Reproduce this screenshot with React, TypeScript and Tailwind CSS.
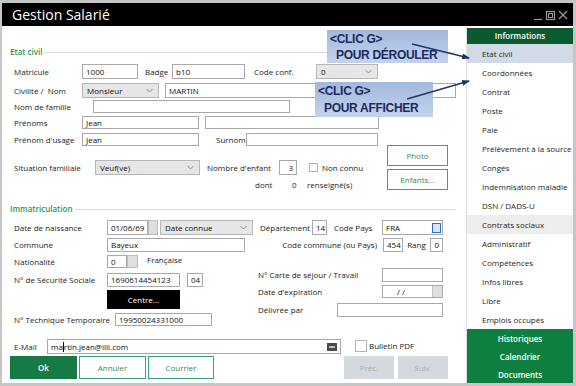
import React from 'react';

function Field({ className = '', children }: { className?: string; children?: React.ReactNode }) {
  return (
    <div className={`h-full shrink-0 border border-[#a9a9a9] bg-white px-[3px] flex items-center leading-none text-[#111] ${className}`}>
      {children}
    </div>
  );
}

function Chevron() {
  return (
    <svg width="7" height="5" viewBox="0 0 7 5" className="shrink-0">
      <path d="M0.5 1 L3.5 4 L6.5 1" fill="none" stroke="#8a8a8a" strokeWidth="1" />
    </svg>
  );
}

function Combo({ className = '', value }: { className?: string; value: string }) {
  return (
    <div className={`h-full shrink-0 border border-[#b7b7b7] bg-[#e6e6e6] pl-[4px] pr-[5px] flex items-center justify-between leading-none text-[#111] ${className}`}>
      <span>{value}</span>
      <Chevron />
    </div>
  );
}

function MiniBtn({ className = '' }: { className?: string }) {
  return <div className={`h-full shrink-0 bg-[#dedede] border border-[#bdbdbd] ${className}`} />;
}

function Section({ title }: { title: string }) {
  return (
    <div className="flex items-center h-[12px] pl-[8px] pr-[11px]">
      <span className="text-[#1f9a57] font-semibold">{title}</span>
      <div className="flex-1 h-px bg-[#dadada] ml-[3px]" />
    </div>
  );
}

function GreenOutline({ className = '', children }: { className?: string; children: React.ReactNode }) {
  return (
    <div className={`shrink-0 border border-[#3ba279] bg-white text-[#2c8c5c] flex items-center justify-center ${className}`}>
      {children}
    </div>
  );
}

const menu = [
  'Etat civil',
  'Coordonnées',
  'Contrat',
  'Poste',
  'Paie',
  'Prélèvement à la source',
  'Congés',
  'Indemnisation maladie',
  'DSN / DADS-U',
  'Contrats sociaux',
  'Administratif',
  'Compétences',
  'Infos libres',
  'Libre',
  'Emplois occupés',
];

function Sidebar() {
  return (
    <div className="w-[107px] shrink-0 flex flex-col pt-[2px] border-l border-[#e0e0e0]">
      <div className="h-[16px] bg-[#0b5a2f] text-white font-semibold flex items-center justify-center">
        Informations
      </div>
      {menu.map((m) => (
        <div
          key={m}
          className={`h-[19px] flex items-center pl-[15px] text-[#1e1e1e] whitespace-nowrap ${
            m === 'Etat civil' ? 'bg-[#d2dbe5]' : m === 'Contrats sociaux' ? 'bg-[#ededed]' : ''
          }`}
        >
          {m}
        </div>
      ))}
      <div className="flex-1 bg-[#0f7f3f] flex flex-col pt-[1px] text-white font-semibold">
        <div className="h-[18px] flex items-center justify-center">Historiques</div>
        <div className="h-[18px] flex items-center justify-center">Calendrier</div>
        <div className="h-[18px] flex items-center justify-center">Documents</div>
      </div>
    </div>
  );
}

function Form() {
  return (
    <div className="flex-1 flex flex-col">
      <div className="mt-[20px]">
        <Section title="Etat civil" />
      </div>

      <div className="pl-[12px] flex flex-col">
        {/* Matricule */}
        <div className="flex items-center h-[15px] mt-[6px]">
          <span className="w-[68px] shrink-0">Matricule</span>
          <Field className="w-[56px]">1000</Field>
          <span className="ml-[6px] w-[28px] shrink-0 pl-[1px]">Badge</span>
          <Field className="w-[73px]">b10</Field>
          <span className="w-[71px] shrink-0 pl-[9px]">Code conf.</span>
          <Combo className="w-[62px]" value="0" />
        </div>

        {/* Civilité */}
        <div className="flex items-center h-[15px] mt-[4px]">
          <span className="w-[68px] shrink-0 whitespace-pre">Civilité /  Nom</span>
          <Combo className="w-[77px]" value="Monsieur" />
          <Field className="ml-[6px] w-[291px]">MARTIN</Field>
        </div>

        {/* Nom de famille */}
        <div className="flex items-center h-[13px] mt-[2px]">
          <span className="w-[79px] shrink-0">Nom de famille</span>
          <Field className="w-[197px]" />
        </div>

        {/* Prénoms */}
        <div className="flex items-center h-[13px] mt-[3px]">
          <span className="w-[68px] shrink-0">Prénoms</span>
          <Field className="w-[117px]">Jean</Field>
          <Field className="ml-[6px] w-[174px]" />
        </div>

        {/* Prénom d'usage */}
        <div className="flex items-center h-[13px] mt-[4px]">
          <span className="w-[68px] shrink-0">Prénom d'usage</span>
          <Field className="w-[117px]">Jean</Field>
          <span className="ml-[17px] w-[30px] shrink-0">Surnom</span>
          <Field className="w-[132px]" />
        </div>

        {/* Situation familiale */}
        <div className="flex h-[46px] mt-[-1px]">
          <div className="w-[373px] shrink-0 flex flex-col">
            <div className="flex items-center h-[15px] mt-[15px]">
              <span className="w-[81px] shrink-0">Situation familiale</span>
              <Combo className="w-[105px]" value="Veuf(ve)" />
              <span className="ml-[7px] w-[72px] shrink-0">Nombre d'enfant</span>
              <Field className="w-[18px] justify-end">3</Field>
              <div className="ml-[12px] w-[9px] h-[9px] border border-[#b3b3b3] bg-white shrink-0" />
              <span className="ml-[4px]">Non connu</span>
            </div>
            <div className="flex items-center h-[12px] mt-[4px]">
              <span className="ml-[241px] w-[37px] shrink-0">dont</span>
              <span className="w-[15px] shrink-0">0</span>
              <span>renseigné(s)</span>
            </div>
          </div>
          <div className="flex flex-col gap-[3px]">
            <GreenOutline className="w-[61px] h-[21px]">Photo</GreenOutline>
            <GreenOutline className="w-[61px] h-[21px]">Enfants...</GreenOutline>
          </div>
        </div>
      </div>

      <div className="mt-[12px] -ml-[0px]">
        <Section title="Immatriculation" />
      </div>

      <div className="pl-[12px] flex flex-col">
        {/* Date de naissance */}
        <div className="flex items-center h-[15px] mt-[5px]">
          <span className="w-[93px] shrink-0">Date de naissance</span>
          <Field className="w-[41px]">01/06/69</Field>
          <MiniBtn className="w-[10px]" />
          <Combo className="ml-[2px] w-[93px]" value="Date connue" />
          <span className="ml-[7px] w-[52px] shrink-0">Département</span>
          <Field className="w-[15px]">14</Field>
          <span className="ml-[7px] w-[48px] shrink-0">Code Pays</span>
          <Field className="w-[61px] justify-between pr-[1px]">
            <span>FRA</span>
            <div className="w-[9px] h-[10px] border-[1.5px] border-[#2a6bc6] bg-[#e4e4e4]" />
          </Field>
        </div>

        {/* Commune */}
        <div className="flex items-center h-[14px] mt-[3px]">
          <span className="w-[93px] shrink-0">Commune</span>
          <Field className="w-[138px]">Bayeux</Field>
          <span className="w-[138px] shrink-0 text-right pr-[6px]">Code commune (ou Pays)</span>
          <Field className="w-[20px]">454</Field>
          <span className="w-[27px] shrink-0 text-center">Rang</span>
          <Field className="w-[13px] justify-end">0</Field>
        </div>

        <div className="flex">
          <div className="w-[244px] shrink-0 flex flex-col">
            <div className="flex items-center h-[13px] mt-[3px]">
              <span className="w-[93px] shrink-0">Nationalité</span>
              <Field className="w-[20px]">0</Field>
              <MiniBtn className="w-[11px]" />
              <span className="ml-[9px] -mt-[3px]">Française</span>
            </div>
            <div className="flex items-center h-[14px] mt-[5px]">
              <span className="w-[93px] shrink-0">N° de Sécurité Sociale</span>
              <Field className="w-[73px]">1690614454123</Field>
              <Field className="ml-[7px] w-[16px]">04</Field>
            </div>
            <div className="flex h-[19px] mt-[3px]">
              <div className="ml-[93px] w-[73px] bg-black text-white flex items-center justify-center">Centre...</div>
            </div>
            <div className="flex items-center h-[13px] mt-[4px]">
              <span className="w-[101px] shrink-0">N° Technique Temporaire</span>
              <Field className="w-[97px]">19950024331000</Field>
            </div>
          </div>
          <div className="w-[185px] shrink-0 flex flex-col">
            <div className="flex items-center h-[14px] mt-[16px]">
              <span className="flex-1">N° Carte de séjour / Travail</span>
              <Field className="w-[61px]" />
            </div>
            <div className="flex items-center h-[13px] mt-[3px]">
              <span className="flex-1">Date d'expiration</span>
              <Field className="w-[61px] justify-between pr-0 pl-[14px]">
                <span>/ /</span>
                <div className="w-[10px] h-full bg-[#dedede] border-l border-[#c4c4c4]" />
              </Field>
            </div>
            <div className="flex items-center h-[14px] mt-[5px]">
              <span className="flex-1">Délivrée par</span>
              <Field className="w-[106px]" />
            </div>
          </div>
        </div>

        {/* E-Mail */}
        <div className="flex items-center h-[15px] mt-[13px]">
          <span className="w-[33px] shrink-0">E-Mail</span>
          <Field className="w-[294px] justify-between pr-[3px]">
            <span className="flex items-center">
              ma<span className="inline-block w-px h-[10px] bg-black" />rtin.jean@illi.com
            </span>
            <div className="w-[10px] h-[8px] bg-[#4a4a4a] flex items-center justify-center">
              <div className="w-[6px] h-[2px] bg-[#bdbdbd]" />
            </div>
          </Field>
          <div className="ml-[14px] w-[12px] h-[12px] border border-[#b3b3b3] bg-white shrink-0 -mt-[2px]" />
          <span className="ml-[2px] -mt-[2px]">Bulletin PDF</span>
        </div>

        {/* Buttons */}
        <div className="flex h-[23px] mt-[2px] -ml-[4px]">
          <div className="w-[67px] bg-[#157a45] text-white font-semibold flex items-center justify-center">Ok</div>
          <GreenOutline className="ml-[2px] w-[67px]">Annuler</GreenOutline>
          <GreenOutline className="ml-[2px] w-[66px]">Courrier</GreenOutline>
          <div className="ml-[130px] w-[50px] bg-[#d4d9dd] text-[#a3abb1] flex items-center justify-center">Préc.</div>
          <div className="ml-[4px] w-[50px] bg-[#d4d9dd] text-[#a3abb1] flex items-center justify-center">Suiv.</div>
        </div>
      </div>
    </div>
  );
}

function Callout({ className = '', line1, line2, indent }: { className?: string; line1: string; line2: string; indent: string }) {
  return (
    <div
      className={`absolute bg-gradient-to-b from-[#a2b8de] to-[#c4d3ec] text-[#1b2a5c] font-bold text-[12px] leading-[16px] font-['Liberation_Sans',Arial,sans-serif] tracking-[-0.3px] ${className}`}
    >
      <div className="pl-[3px] pt-[1px]">{line1}</div>
      <div className={indent}>{line2}</div>
    </div>
  );
}

export default function App() {
  return (
    <div className="relative w-[576px] h-[386px] bg-white border-t-[3px] border-l-2 border-r-[3px] border-b-[3px] border-[#c6c6c6] overflow-hidden font-['Open_Sans','Noto_Sans',sans-serif] text-[8px] text-[#1c1c1c] flex flex-col">
      <div className="h-[23px] shrink-0 bg-black flex items-center justify-between pl-[10px] pr-[3px]">
        <span className="text-white text-[14px] font-['Open_Sans',sans-serif]">Gestion Salarié</span>
        <svg width="36" height="14" viewBox="0 0 36 14">
          <line x1="0" y1="11.5" x2="8" y2="11.5" stroke="#9a9a9a" strokeWidth="1.2" />
          <rect x="12.5" y="3.5" width="8" height="8" fill="none" stroke="#9a9a9a" strokeWidth="1.2" />
          <rect x="14.5" y="5.5" width="4" height="4" fill="none" stroke="#9a9a9a" strokeWidth="1" />
          <path d="M25 3 L33 11 M33 3 L25 11" stroke="#9a9a9a" strokeWidth="1.2" />
        </svg>
      </div>
      <div className="flex-1 flex border-b border-[#8c8c8c]">
        <Form />
        <Sidebar />
      </div>

      <Callout className="left-[325px] top-[27px] w-[121px] h-[33px]" line1="<CLIC G>" line2="POUR DÉROULER" indent="pl-[9px]" />
      <Callout className="left-[313px] top-[79px] w-[118px] h-[35px]" line1="<CLIC G>" line2="POUR AFFICHER" indent="pl-[9px] pt-[1px]" />

      <svg className="absolute left-0 top-0 pointer-events-none" width="576" height="386" viewBox="-2 -3 576 386">
        <defs>
          <marker id="ah" markerWidth="8" markerHeight="6" refX="7" refY="3" orient="auto" markerUnits="userSpaceOnUse">
            <path d="M0 0 L8 3 L0 6 Z" fill="#1f3867" />
          </marker>
        </defs>
        <line x1="408" y1="38" x2="465" y2="52" stroke="#1f3867" strokeWidth="1.5" markerEnd="url(#ah)" />
        <line x1="403" y1="93" x2="465" y2="75" stroke="#1f3867" strokeWidth="1.5" markerEnd="url(#ah)" />
      </svg>
    </div>
  );
}
